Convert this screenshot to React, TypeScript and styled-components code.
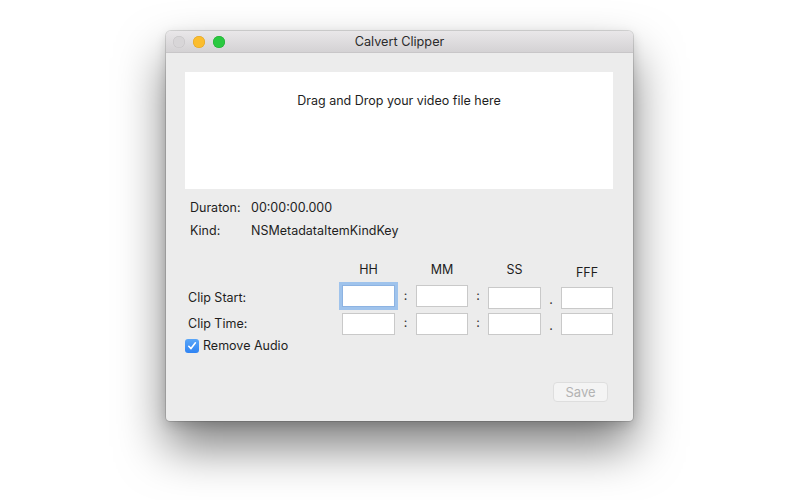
import React from "react";
import styled, { createGlobalStyle } from "styled-components";

const Global = createGlobalStyle`
  html, body { margin: 0; padding: 0; background: #ffffff; }
  body { width: 800px; height: 500px; overflow: hidden; font-family: Inter, "Liberation Sans", Arial, sans-serif; }
  * { box-sizing: border-box; }
`;

const Stage = styled.div`
  padding: 31px 0 0 166px;
`;

const Window = styled.div`
  width: 467px;
  height: 390px;
  border-radius: 5px 5px 4px 4px;
  background: #ececec;
  box-shadow: 0 0 0 1px rgba(0, 0, 0, 0.13), 0 26px 48px rgba(0, 0, 0, 0.5), 0 4px 12px rgba(0, 0, 0, 0.15);
  display: flex;
  flex-direction: column;
  overflow: hidden;
`;

const TitleBar = styled.div`
  height: 22px;
  flex: none;
  position: relative;
  display: flex;
  align-items: center;
  justify-content: center;
  background: linear-gradient(#e9e7e9, #d4d2d4);
  border-bottom: 1px solid #c8c6c8;
  font-size: 12.7px;
  color: #2b2b2b;
`;

const Lights = styled.div`
  position: absolute;
  left: 7px;
  top: 5px;
  display: flex;
  gap: 8px;
`;

const Light = styled.span<{ $c: string; $b: string }>`
  width: 12px;
  height: 12px;
  border-radius: 50%;
  background: ${(p) => p.$c};
  box-shadow: inset 0 0 0 0.5px ${(p) => p.$b};
`;

const Body = styled.div`
  flex: 1;
  display: flex;
  flex-direction: column;
  padding: 19px 20px 18px 19px;
  font-size: 12.5px;
  color: #1e1e1e;
`;

const DropZone = styled.div`
  height: 117px;
  flex: none;
  background: #ffffff;
  display: flex;
  justify-content: center;
  align-items: flex-start;
  padding-top: 21px;
`;

const Info = styled.div`
  display: grid;
  grid-template-columns: 61px auto;
  row-gap: 7px;
  padding: 11px 0 0 5px;
  line-height: 16px;
`;

const TimeGrid = styled.div`
  display: grid;
  grid-template-columns: 157px 53px 21px 52px 20px 53px 20px 52px;
  grid-template-rows: 18px 27px 24px;
  row-gap: 2px;
  margin-top: 23px;
`;

const Head = styled.div<{ $low?: boolean }>`
  text-align: center;
  align-self: ${(p) => (p.$low ? "end" : "start")};
  line-height: 15px;
`;

const RowLabel = styled.div`
  padding: 0 0 3px 3px;
  align-self: end;
  line-height: 16px;
`;

const Field = styled.input<{ $focus?: boolean; $low?: boolean }>`
  width: 100%;
  height: 22px;
  align-self: ${(p) => (p.$low ? "end" : "center")};
  background: #ffffff;
  border: 1px solid #c9c9c9;
  border-top-color: #bdbdbd;
  outline: none;
  margin: 0;
  padding: 0 3px;
  font: inherit;
  box-shadow: ${(p) => (p.$focus ? "0 0 0 3px #9fc3ec" : "none")};
  border-color: ${(p) => (p.$focus ? "#8db3e2" : "#c9c9c9")};
`;

const Sep = styled.div<{ $dot?: boolean }>`
  display: flex;
  justify-content: center;
  align-items: ${(p) => (p.$dot ? "flex-end" : "center")};
  padding-bottom: ${(p) => (p.$dot ? "2px" : "0")};
  line-height: 14px;
  color: #333;
`;

const CheckRow = styled.label`
  display: flex;
  align-items: center;
  gap: 4px;
  margin-top: 3px;
  line-height: 16px;
`;

const Box = styled.span`
  width: 14px;
  height: 14px;
  border-radius: 3px;
  background: linear-gradient(#5aa6f8, #2f83f3);
  display: flex;
  align-items: center;
  justify-content: center;
`;

const Footer = styled.div`
  margin-top: auto;
  display: flex;
  justify-content: flex-end;
  padding-right: 5px;
`;

const SaveButton = styled.button`
  width: 55px;
  height: 20px;
  border: 1px solid #dedede;
  border-radius: 4px;
  background: #f4f4f4;
  color: #b3b3b3;
  font: inherit;
  font-size: 13px;
  padding: 0;
  margin-bottom: 1px;
`;

export default function App() {
  return (
    <>
      <Global />
      <Stage>
        <Window>
          <TitleBar>
            <Lights>
              <Light $c="#d8d6d8" $b="#c4c2c4" />
              <Light $c="#fbbd2e" $b="#dea123" />
              <Light $c="#2ac940" $b="#1ea931" />
            </Lights>
            Calvert Clipper
          </TitleBar>
          <Body>
            <DropZone>Drag and Drop your video file here</DropZone>
            <Info>
              <span>Duraton:</span>
              <span>00:00:00.000</span>
              <span>Kind:</span>
              <span>NSMetadataItemKindKey</span>
            </Info>
            <TimeGrid>
              <div />
              <Head>HH</Head>
              <div />
              <Head>MM</Head>
              <div />
              <Head>SS</Head>
              <div />
              <Head $low>FFF</Head>

              <RowLabel>Clip Start:</RowLabel>
              <Field $focus />
              <Sep>:</Sep>
              <Field />
              <Sep>:</Sep>
              <Field $low />
              <Sep $dot>.</Sep>
              <Field $low />

              <RowLabel>Clip Time:</RowLabel>
              <Field $low />
              <Sep>:</Sep>
              <Field $low />
              <Sep>:</Sep>
              <Field $low />
              <Sep $dot>.</Sep>
              <Field $low />
            </TimeGrid>
            <CheckRow>
              <Box>
                <svg width="10" height="10" viewBox="0 0 10 10">
                  <path d="M1.8 5.3 L4 7.6 L8.4 1.8" fill="none" stroke="#fff" strokeWidth="1.6" strokeLinecap="round" strokeLinejoin="round" />
                </svg>
              </Box>
              Remove Audio
            </CheckRow>
            <Footer>
              <SaveButton disabled>Save</SaveButton>
            </Footer>
          </Body>
        </Window>
      </Stage>
    </>
  );
}
